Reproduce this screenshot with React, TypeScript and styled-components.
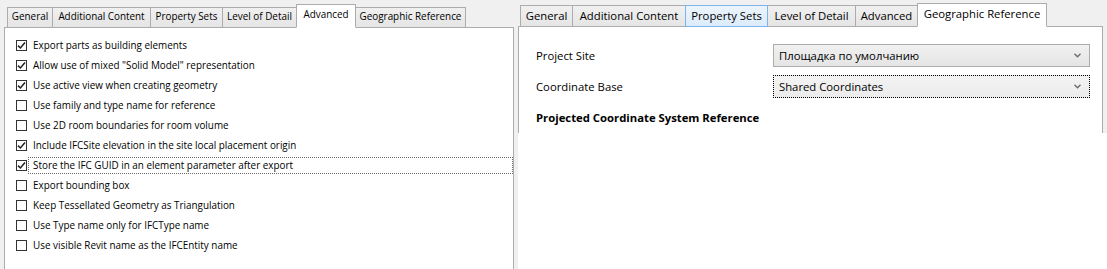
import React from "react";
import styled, { createGlobalStyle, css } from "styled-components";

const GlobalStyle = createGlobalStyle`
  html, body { margin: 0; padding: 0; background: #ffffff; }
  body { font-family: "Open Sans", "Noto Sans", "Liberation Sans", sans-serif; color: #000; }
  * { box-sizing: border-box; }
`;

const Page = styled.div`
  display: flex;
  align-items: flex-start;
  width: 1107px;
  height: 269px;
  overflow: hidden;
`;

const Shot = styled.div<{ $w: number; $h: number; $pl: number; $pr: number; $pt: number; $fs: number }>`
  width: ${(p) => p.$w}px;
  height: ${(p) => p.$h}px;
  padding: ${(p) => p.$pt}px ${(p) => p.$pr}px 0 ${(p) => p.$pl}px;
  background: #f0f0f0;
  overflow: hidden;
  display: flex;
  flex-direction: column;
  font-size: ${(p) => p.$fs}px;
`;

const TabStrip = styled.div<{ $h: number; $inset: number }>`
  display: flex;
  align-items: flex-end;
  height: ${(p) => p.$h}px;
  padding-left: ${(p) => p.$inset}px;
  position: relative;
  z-index: 1;
  margin-bottom: -1px;
`;

const Tab = styled.div<{ $w: number; $h: number; $active?: boolean; $hover?: boolean }>`
  width: ${(p) => p.$w}px;
  height: ${(p) => p.$h}px;
  margin-left: -1px;
  display: flex;
  align-items: center;
  justify-content: center;
  white-space: nowrap;
  border: 1px solid #acacac;
  background: linear-gradient(#f0f0f0, #e5e5e5);
  line-height: 1;
  padding-bottom: 1px;
  &:first-child { margin-left: 0; }
  ${(p) =>
    p.$hover &&
    css`
      background: linear-gradient(#ecf4fc, #dcecfc);
      border-color: #7eb4ea;
      position: relative;
      z-index: 1;
    `}
  ${(p) =>
    p.$active &&
    css`
      background: #ffffff;
      border-bottom-color: #ffffff;
      position: relative;
      z-index: 2;
      padding-bottom: 3px;
    `}
`;

const Panel = styled.div`
  flex: 1;
  background: #ffffff;
  border: 1px solid #acacac;
  border-bottom: none;
`;

const CheckList = styled.div`
  display: flex;
  flex-direction: column;
  padding: 7px 0 0 11px;
`;

const CheckRow = styled.div`
  display: flex;
  align-items: center;
  height: 20.05px;
`;

const Box = styled.span`
  width: 11px;
  height: 11px;
  flex: none;
  border: 1px solid #333333;
  background: #ffffff;
  display: flex;
  align-items: center;
  justify-content: center;
`;

const CheckLabel = styled.span<{ $focused?: boolean }>`
  flex: 1;
  margin-left: 1px;
  padding-left: 4px;
  height: 17px;
  display: flex;
  align-items: center;
  white-space: nowrap;
  border: 1px solid transparent;
  ${(p) =>
    p.$focused &&
    css`
      border: 1px dotted #6a6a6a;
    `}
`;

const Check = () => (
  <svg width="9" height="9" viewBox="0 0 9 9">
    <path d="M1 4.6 L3.4 7 L8 1.4" fill="none" stroke="#222" strokeWidth="1.5" />
  </svg>
);

const Form = styled.div`
  display: grid;
  grid-template-columns: 237px 317px;
  row-gap: 8px;
  padding: 17px 0 0 17px;
  align-items: center;
`;

const FieldLabel = styled.div`
  font-size: 11.3px;
`;

const Combo = styled.div<{ $focused?: boolean }>`
  height: 23px;
  border: 1px solid #acacac;
  background: linear-gradient(#f0f0f0, #e5e5e5);
  display: flex;
  align-items: center;
  justify-content: space-between;
  padding: 0 8px 0 5px;
  font-size: 11.3px;
  ${(p) =>
    p.$focused &&
    css`
      border: 1px dotted #000;
      background: linear-gradient(#f3f3f3, #ececec);
    `}
`;

const Heading = styled.div`
  grid-column: 1 / span 2;
  font-weight: 700;
  font-size: 11.3px;
  margin-top: 4px;
`;

const Chevron = () => (
  <svg width="7" height="5" viewBox="0 0 7 5">
    <path d="M0.5 0.8 L3.5 3.8 L6.5 0.8" fill="none" stroke="#6a6a6a" strokeWidth="1.3" />
  </svg>
);

const leftTabs = [
  { t: "General", w: 46 },
  { t: "Additional Content", w: 99 },
  { t: "Property Sets", w: 73 },
  { t: "Level of Detail", w: 75 },
  { t: "Advanced", w: 60, active: true },
  { t: "Geographic Reference", w: 111 },
];

const rightTabs = [
  { t: "General", w: 53 },
  { t: "Additional Content", w: 114 },
  { t: "Property Sets", w: 83, hover: true },
  { t: "Level of Detail", w: 89 },
  { t: "Advanced", w: 63 },
  { t: "Geographic Reference", w: 130, active: true },
];

const options = [
  { t: "Export parts as building elements", c: true },
  { t: 'Allow use of mixed "Solid Model" representation', c: true },
  { t: "Use active view when creating geometry", c: true },
  { t: "Use family and type name for reference", c: false },
  { t: "Use 2D room boundaries for room volume", c: false },
  { t: "Include IFCSite elevation in the site local placement origin", c: true },
  { t: "Store the IFC GUID in an element parameter after export", c: true, f: true },
  { t: "Export bounding box", c: false },
  { t: "Keep Tessellated Geometry as Triangulation", c: false },
  { t: "Use Type name only for IFCType name", c: false },
  { t: "Use visible Revit name as the IFCEntity name", c: false },
];

export default function App() {
  return (
    <>
      <GlobalStyle />
      <Page>
        <Shot $w={518} $h={269} $pl={4} $pr={4} $pt={4} $fs={9.9}>
          <TabStrip $h={24} $inset={3}>
            {leftTabs.map((tab) => (
              <Tab key={tab.t} $w={tab.w} $h={tab.active ? 24 : 21} $active={tab.active}>
                {tab.t}
              </Tab>
            ))}
          </TabStrip>
          <Panel>
            <CheckList>
              {options.map((o) => (
                <CheckRow key={o.t}>
                  <Box>{o.c && <Check />}</Box>
                  <CheckLabel $focused={o.f}>{o.t}</CheckLabel>
                </CheckRow>
              ))}
            </CheckList>
          </Panel>
        </Shot>
        <Shot $w={589} $h={133} $pl={0} $pr={4} $pt={3} $fs={11.3}>
          <TabStrip $h={24} $inset={2}>
            {rightTabs.map((tab) => (
              <Tab key={tab.t} $w={tab.w} $h={tab.active ? 24 : 22} $active={tab.active} $hover={tab.hover}>
                {tab.t}
              </Tab>
            ))}
          </TabStrip>
          <Panel>
            <Form>
              <FieldLabel>Project Site</FieldLabel>
              <Combo>
                <span>Площадка по умолчанию</span>
                <Chevron />
              </Combo>
              <FieldLabel>Coordinate Base</FieldLabel>
              <Combo $focused>
                <span>Shared Coordinates</span>
                <Chevron />
              </Combo>
              <Heading>Projected Coordinate System Reference</Heading>
            </Form>
          </Panel>
        </Shot>
      </Page>
    </>
  );
}
